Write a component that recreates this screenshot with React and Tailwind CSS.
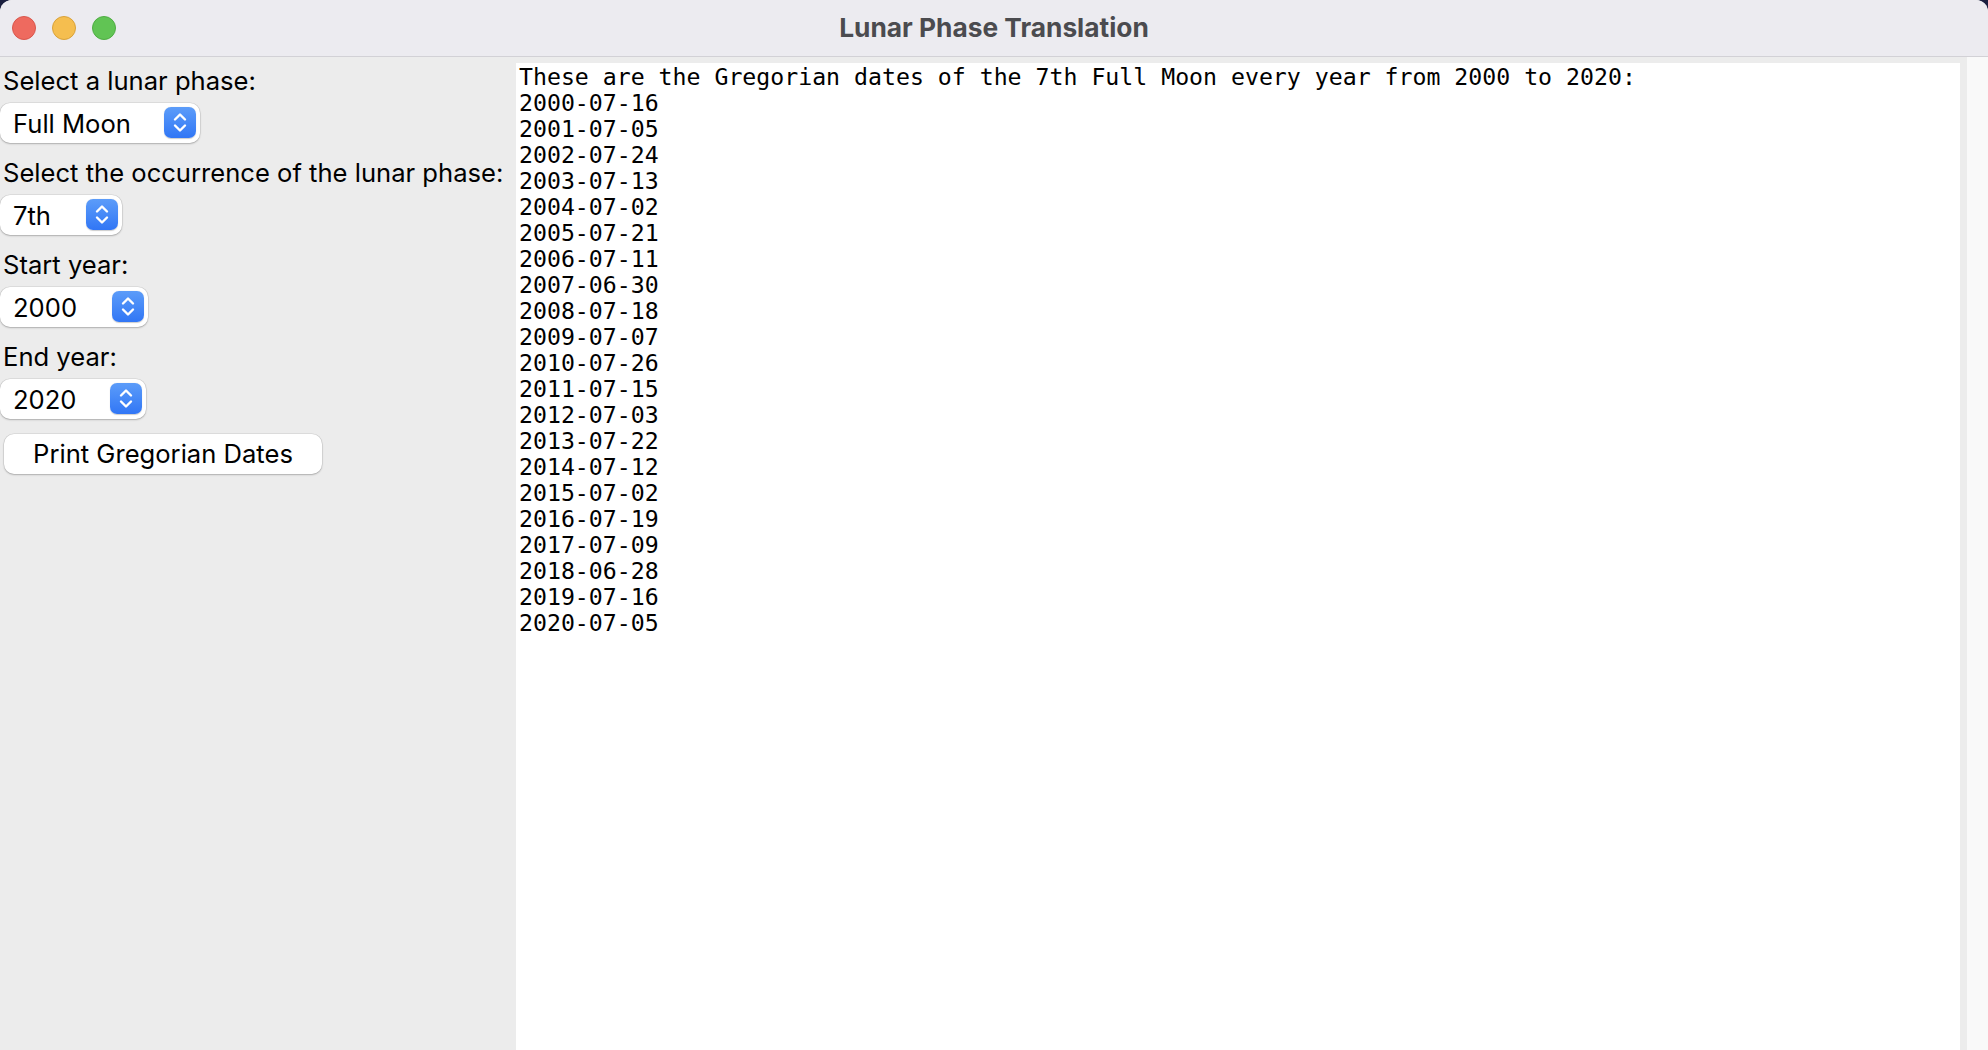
import React, { useState } from 'react'

const PHASES = ['New Moon', 'First Quarter', 'Full Moon', 'Last Quarter']
const ORDINALS = ['1st','2nd','3rd','4th','5th','6th','7th','8th','9th','10th','11th','12th']

const DATES = [
  '2000-07-16', '2001-07-05', '2002-07-24', '2003-07-13', '2004-07-02',
  '2005-07-21', '2006-07-11', '2007-06-30', '2008-07-18', '2009-07-07',
  '2010-07-26', '2011-07-15', '2012-07-03', '2013-07-22', '2014-07-12',
  '2015-07-02', '2016-07-19', '2017-07-09', '2018-06-28', '2019-07-16',
  '2020-07-05',
]

const sans = { fontFamily: 'Inter, "Liberation Sans", Arial, sans-serif' }

function Stepper() {
  return (
    <div className="w-[32px] h-[31px] rounded-[7px] bg-gradient-to-b from-[#5c9cf9] to-[#3176f5] flex items-center justify-center shadow-[0_0.5px_1px_rgba(0,0,0,0.2)]">
      <svg width="32" height="31" viewBox="0 0 32 31" fill="none">
        <polyline points="11,12.5 16,7.5 21,12.5" stroke="white" strokeWidth="2.4" strokeLinecap="round" strokeLinejoin="round" />
        <polyline points="11,18.5 16,23.5 21,18.5" stroke="white" strokeWidth="2.4" strokeLinecap="round" strokeLinejoin="round" />
      </svg>
    </div>
  )
}

function PopUp({ value, width }) {
  return (
    <div
      className="h-[40px] bg-white rounded-[10px] flex items-start justify-between pl-[13px] pr-[4px] pt-[4px] shadow-[0_0_0_0.5px_rgba(0,0,0,0.12),0_1px_2px_rgba(0,0,0,0.22)]"
      style={{ width }}
    >
      <span className="text-[25.6px] leading-[34px] text-black">{value}</span>
      <Stepper />
    </div>
  )
}

function Field({ label, value, width }) {
  return (
    <div className="flex flex-col">
      <div className="text-[25.6px] leading-[30px] text-black pl-[3px] whitespace-nowrap -mt-[1px] mb-[1px]">{label}</div>
      <div className="mt-[6px]">
        <PopUp value={value} width={width} />
      </div>
    </div>
  )
}

export default function App() {
  const [phase] = useState(PHASES[2])
  const [occ] = useState(ORDINALS[6])
  const [start] = useState(2000)
  const [end] = useState(2020)

  return (
    <div className="w-[1988px] h-[1050px] bg-[#1b1f3f] overflow-hidden" style={sans}>
      <div className="w-full h-full rounded-t-[12px] overflow-hidden flex flex-col bg-[#ececec]">
        <div className="h-[57px] shrink-0 bg-[#ecebf0] border-b border-[#d2d1d6] relative flex items-center justify-center">
          <div className="absolute left-[12px] top-[16px] flex gap-[16px]">
            <span className="w-[24px] h-[24px] rounded-full bg-[#ee6a5f] border border-[#d9574d]" />
            <span className="w-[24px] h-[24px] rounded-full bg-[#f5be4f] border border-[#d9a23a]" />
            <span className="w-[24px] h-[24px] rounded-full bg-[#61c454] border border-[#4fad43]" />
          </div>
          <div className="text-[26.3px] font-bold text-[#4b4b4f] -mt-[1px]">Lunar Phase Translation</div>
        </div>

        <div className="flex-1 flex min-h-0">
          <div className="w-[516px] shrink-0 pt-[10px] flex flex-col gap-[16px]">
            <Field label="Select a lunar phase:" value={phase} width={200} />
            <Field label="Select the occurrence of the lunar phase:" value={occ} width={122} />
            <Field label="Start year:" value={start} width={148} />
            <Field label="End year:" value={end} width={146} />
            <div className="pl-[4px] -mt-[1px]">
              <button className="w-[318px] h-[40px] bg-white rounded-[10px] text-[25.6px] leading-[40px] text-black shadow-[0_0_0_0.5px_rgba(0,0,0,0.12),0_1px_2px_rgba(0,0,0,0.22)]">
                Print Gregorian Dates
              </button>
            </div>
          </div>

          <div className="flex-1 pt-[6px] flex">
            <div
              className="flex-1 bg-white pl-[3px] pt-[1px] text-[23.2px] leading-[26px] text-black whitespace-pre"
              style={{ fontFamily: '"DejaVu Sans Mono", Menlo, monospace' }}
            >
              <div>These are the Gregorian dates of the {occ} {phase} every year from {start} to {end}:</div>
              {DATES.map(d => (
                <div key={d}>{d}</div>
              ))}
            </div>
            <div className="w-[7px] shrink-0" />
          </div>
          <div className="w-[21px] shrink-0 bg-[#f9f9f9]" />
        </div>
      </div>
    </div>
  )
}
